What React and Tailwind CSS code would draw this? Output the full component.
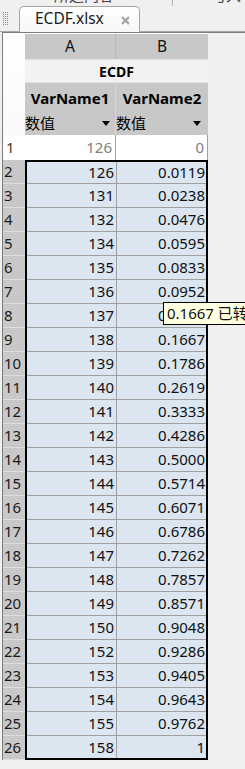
import { useState } from 'react'

const ROWS = [
  ['126', '0.0119'], ['131', '0.0238'], ['132', '0.0476'], ['134', '0.0595'],
  ['135', '0.0833'], ['136', '0.0952'], ['137', '0.1190'], ['138', '0.1667'],
  ['139', '0.1786'], ['140', '0.2619'], ['141', '0.3333'], ['142', '0.4286'],
  ['143', '0.5000'], ['144', '0.5714'], ['145', '0.6071'], ['146', '0.6786'],
  ['147', '0.7262'], ['148', '0.7857'], ['149', '0.8571'], ['150', '0.9048'],
  ['152', '0.9286'], ['153', '0.9405'], ['154', '0.9643'], ['155', '0.9762'],
  ['158', '1'],
]

const rowHeight = (i, n) => (i === 0 || i === n - 1 ? 'h-[22px]' : 'h-[24px]')

function Triangle() {
  return (
    <svg width="8" height="5" viewBox="0 0 8 5" className="shrink-0">
      <path d="M0 0 L8 0 L4 5 Z" fill="#000" />
    </svg>
  )
}

function Grip() {
  return (
    <div className="flex flex-col gap-[1px] pt-[6px] pl-[3px] w-[19px]">
      {Array.from({ length: 7 }).map((_, i) => (
        <div key={i} className="flex gap-[1px]">
          <span className="w-[1px] h-[1px] bg-[#8a8a8a]" />
          <span className="w-[1px] h-[1px] bg-[#8a8a8a]" />
          <span className="w-[1px] h-[1px] bg-[#8a8a8a]" />
        </div>
      ))}
    </div>
  )
}

export default function App() {
  // 鼠标悬停的单元格（第 8 行 B 列）显示提示
  const [hover] = useState(6)
  const n = ROWS.length

  return (
    <div className="w-[245px] h-[769px] overflow-hidden bg-[#f0f0f0] font-['Noto_Sans','Noto_Sans_CJK_SC',sans-serif] text-black">

      {/* ── 上方被截断的标题条 ───────────────────── */}
      <div className="h-[6px] overflow-hidden flex text-[15px] leading-[16px] text-[#444]">
        <div className="-mt-[13px] pl-[54px] w-[174px]">所选内容</div>
        <div className="w-[1px] h-[6px] bg-[#b0b0b0]" />
        <div className="-mt-[13px] pl-[38px]">与入(</div>
      </div>

      {/* ── 标签栏 ─────────────────────────────── */}
      <div className="h-[26px] flex">
        <div className="border-b border-[#a6a6a6]">
          <Grip />
        </div>
        <div className="w-[121px] h-[26px] border border-b-0 border-[#a6a6a6] rounded-t-[5px] bg-gradient-to-b from-white to-[#f7f7f7] flex items-center pl-[15px]">
          <span className="text-[15.5px] leading-none text-[#1a1a1a] pb-[1px]">ECDF.xlsx</span>
          <svg width="9" height="9" viewBox="0 0 9 9" className="ml-[17px] mt-[1px]">
            <path d="M1 1 L8 8 M8 1 L1 8" stroke="#a0a0a0" strokeWidth="2" />
          </svg>
        </div>
        <div className="flex-1 border-b border-[#a6a6a6]" />
      </div>

      {/* ── 表格面板 ───────────────────────────── */}
      <div className="ml-[2px] border-t border-l border-[#7c7c7c] flex">

        {/* 行号列 */}
        <div className="w-[22px] flex flex-col text-[15px] leading-none">
          <div className="h-[102px] bg-gradient-to-b from-white to-[#fafafa]" />
          <div className="h-[25px] bg-white flex items-center pl-[3px] text-[#4a3a20]">1</div>
          {ROWS.map((_, i) => (
            <div
              key={i}
              className="h-[24px] bg-[#c8c8c8] border-b border-[#dedede] flex items-center pl-[1px] text-[#1a1a1a]"
            >
              {i + 2}
            </div>
          ))}
        </div>

        {/* 数据区 */}
        <div className="w-[183px] flex flex-col">
          <div className="h-[1px] bg-white" />

          {/* 列标 A / B */}
          <div className="h-[25px] flex bg-[#c8c8c8] text-[15.5px] text-[#111]">
            <div className="w-[91px] border-r border-[#b8b8b8] flex items-center justify-center">A</div>
            <div className="w-[92px] flex items-center justify-center">B</div>
          </div>

          {/* 表名 */}
          <div className="h-[24px] bg-[#f2f2f2] border-y border-[#e2e2e2] flex items-center justify-center text-[14px] font-bold">
            ECDF
          </div>

          {/* 变量名 */}
          <div className="h-[28px] flex bg-[#c8c8c8] text-[15px] font-bold">
            <div className="w-[91px] border-r border-[#d6d6d6] flex items-center justify-center pt-[2px]">VarName1</div>
            <div className="w-[92px] flex items-center justify-center pt-[2px]">VarName2</div>
          </div>

          {/* 类型 */}
          <div className="h-[24px] flex bg-[#c8c8c8] text-[15px]">
            <div className="w-[91px] border-r border-[#d6d6d6] flex items-center justify-between pr-[5px]">
              <span>数值</span><Triangle />
            </div>
            <div className="w-[92px] flex items-center justify-between pr-[7px]">
              <span>数值</span><Triangle />
            </div>
          </div>

          {/* 第 1 行 */}
          <div className="h-[25px] flex bg-white text-[15px] text-[#808080]">
            <div className="w-[91px] border-r border-[#a0a0a0] flex items-center justify-end pr-[3px]">126</div>
            <div className="w-[92px] border-r border-[#a0a0a0] flex items-center justify-end pr-[3px]">0</div>
          </div>

          {/* 选中区域 */}
          <div className="border-2 border-black bg-[#dce6f1] text-[15px] text-[#111]">
            {ROWS.map(([a, b], i) => (
              <div
                key={i}
                className={`flex ${rowHeight(i, n)} ${i < n - 1 ? 'border-b border-[#a0a0a0]' : ''}`}
              >
                <div className="w-[90px] border-r border-[#a0a0a0] flex items-center justify-end pr-[2px]">{a}</div>
                <div className="relative w-[89px] flex items-center justify-end pr-[1px]">
                  {b}
                  {i === hover && (
                    <div className="absolute left-[46px] -top-[2px] h-[23px] w-[130px] bg-[#ffffe1] border border-black flex items-center pl-[3px] whitespace-nowrap z-10">
                      0.1667 已转换为数值
                    </div>
                  )}
                </div>
              </div>
            ))}
          </div>
        </div>

        <div className="flex-1" />
      </div>
    </div>
  )
}
